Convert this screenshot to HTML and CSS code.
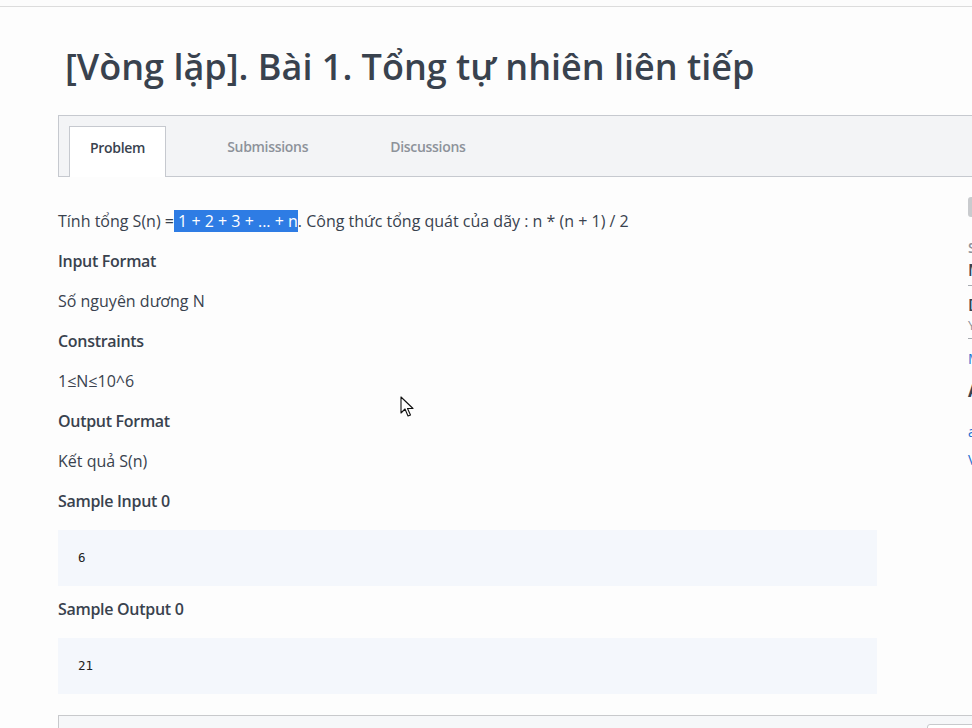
FILE: index.html
```html
<!DOCTYPE html>
<html lang="vi">
<head>
<meta charset="utf-8">
<title>[Vòng lặp]. Bài 1. Tổng tự nhiên liên tiếp</title>
<link rel="stylesheet" href="styles.css">
</head>
<body>
<div class="topbar"></div>
<div class="page">
  <h1 class="title">[Vòng lặp]. Bài 1. Tổng tự nhiên liên tiếp</h1>
  <div class="tabs">
    <div class="tab active">Problem</div>
    <div class="tab">Submissions</div>
    <div class="tab">Discussions</div>
  </div>
  <div class="layout">
    <div class="main">
      <p class="txt">Tính tổng S(n) =<span class="sel"> 1 + 2 + 3 + ... + n</span>. Công thức tổng quát của dãy : n * (n + 1) / 2</p>
      <p class="hd">Input Format</p>
      <p class="txt">Số nguyên dương N</p>
      <p class="hd">Constraints</p>
      <p class="txt">1≤N≤10^6</p>
      <p class="hd">Output Format</p>
      <p class="txt">Kết quả S(n)</p>
      <p class="hd">Sample Input 0</p>
      <pre class="code">6</pre>
      <p class="hd hd-out">Sample Output 0</p>
      <pre class="code">21</pre>
      <div class="editor"><div class="editor-inner"></div></div>
    </div>
    <div class="side">
      <div class="side-btn">Submit</div>
      <div class="side-label">Submitted By</div>
      <div class="side-val">Max Score</div>
      <div class="side-rule"></div>
      <div class="side-val">Difficulty</div>
      <div class="side-label2">Your</div>
      <div class="side-rule"></div>
      <div class="side-link">More</div>
      <div class="side-head">Author</div>
      <div class="side-link">admin</div>
      <div class="side-link">View</div>
    </div>
  </div>
</div>
<svg class="cursor" width="14" height="22" viewBox="0 0 14 22"><path d="M1 1 L1 17 L5 13 L8 20 L10.5 19 L7.5 12.5 L13 12.5 Z" fill="#fff" stroke="#111" stroke-width="1.1" stroke-linejoin="round"/></svg>
</body>
</html>
```

FILE: styles.css
```css
html, body {
  margin: 0;
  padding: 0;
  background: #fdfdfd;
  overflow: hidden;
  height: 728px;
}
body {
  font-family: "Open Sans", "Noto Sans", sans-serif;
  color: #39424e;
}
.topbar {
  height: 6px;
  border-bottom: 1px solid #dcdcdc;
  background: #fcfcfc;
}
.page {
  padding-left: 58px;
  width: 1300px;
}
.title {
  margin: 0 0 39px 0;
  padding: 39px 0 0 7px;
  height: 69px;
  box-sizing: border-box;
  font-size: 36px;
  font-weight: 600;
  line-height: 42px;
  letter-spacing: 0;
  color: #39424e;
}
.tabs {
  display: flex;
  align-items: flex-end;
  height: 60px;
  border: 1px solid #c6c9cf;
  background: #f3f4f6;
  padding-left: 10px;
}
.tab {
  padding: 0 21px;
  margin-right: 40px;
  height: 50px;
  line-height: 42px;
  font-size: 14px;
  font-weight: 600;
  color: #8d929a;
  letter-spacing: -0.3px;
  box-sizing: border-box;
}
.tab.active {
  background: #fff;
  border: 1px solid #c6c9cf;
  border-bottom: none;
  color: #39424e;
  margin-bottom: -1px;
  height: 51px;
  padding: 0 20px;
}
.layout {
  display: flex;
  gap: 91px;
  margin-top: 32px;
}
.main {
  width: 819px;
  flex: none;
}
.txt, .hd {
  margin: 0 0 16px 0;
  font-size: 16px;
  line-height: 24px;
}
.txt {
  letter-spacing: 0;
}
.hd {
  font-weight: 600;
  letter-spacing: -0.3px;
}
.hd-out {
  margin-top: 11px;
}
.sel {
  background: #2e7ce4;
  color: #fff;
}
.code {
  margin: 17px 0 0 0;
  background: #f4f7fc;
  padding: 18px 20px;
  height: 20px;
  line-height: 20px;
  font-family: "DejaVu Sans Mono", monospace;
  font-size: 12.5px;
  color: #222;
}
.editor {
  margin-top: 21px;
  height: 40px;
  width: 1000px;
  border: 1px solid #c8c9cc;
  background: #f6f7f9;
  position: relative;
}
.editor-inner {
  position: absolute;
  left: 868px;
  top: 8px;
  width: 100px;
  height: 30px;
  border: 1px solid #c8c9cc;
  border-radius: 3px;
  background: #fff;
}
.side {
  width: 260px;
  flex: none;
  font-size: 14px;
  margin-top: -12px;
}
.side-btn {
  height: 20px;
  width: 120px;
  background: #c9cbce;
  border-radius: 3px;
  color: #c9cbce;
  font-size: 12px;
  margin-bottom: 22px;
}
.side-label {
  color: #8d929a;
  font-size: 14px;
  line-height: 18px;
  font-weight: 600;
}
.side-val {
  color: #39424e;
  font-size: 16px;
  line-height: 22px;
  font-weight: 600;
  margin-top: 2px;
}
.side-label2 {
  color: #8d929a;
  font-size: 13px;
  line-height: 18px;
}
.side-rule {
  border-top: 1px solid #a7abb1;
  width: 120px;
  margin: 4px 0 8px;
}
.side-link {
  color: #1b6fcf;
  font-size: 14px;
  line-height: 24px;
  margin-bottom: 4px;
}
.side-head {
  color: #39424e;
  font-weight: 700;
  font-size: 17px;
  margin: 8px 0 18px;
}
.cursor {
  position: absolute;
  left: 400px;
  top: 396px;
}
```
